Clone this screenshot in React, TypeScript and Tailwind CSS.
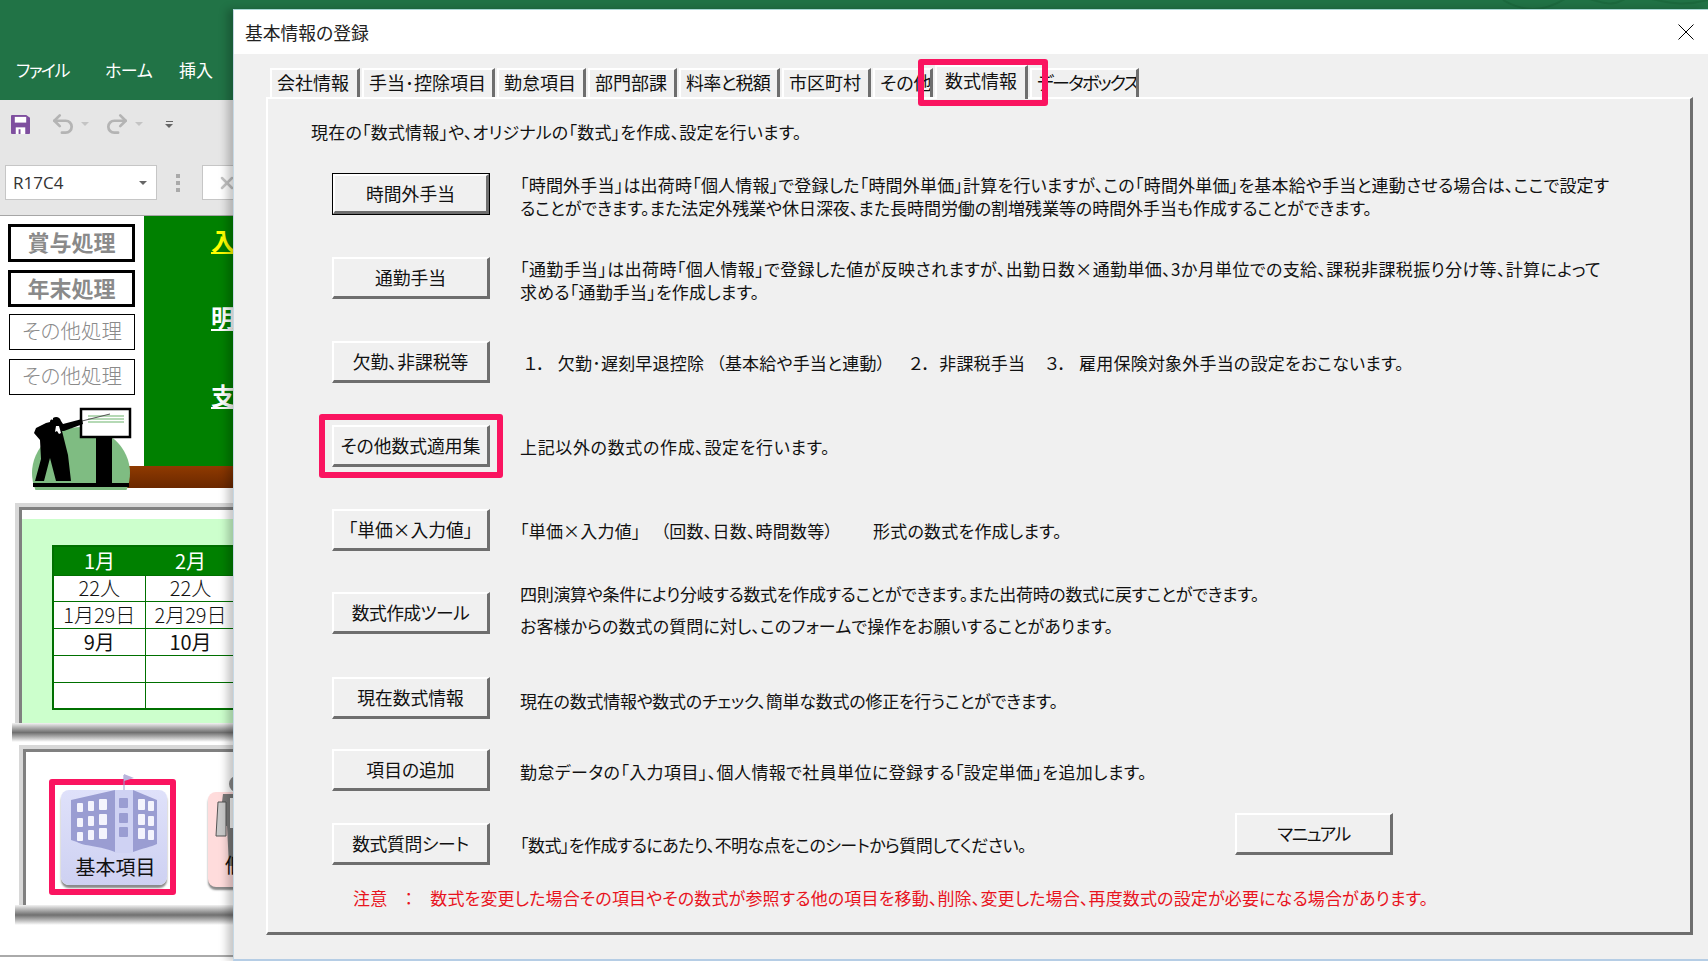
import { Undo2, Redo2, X } from "lucide-react";

const tabs = [
  { label: "会社情報", width: "w-[90px]" },
  { label: "手当･控除項目", width: "w-[133px]" },
  { label: "勤怠項目", width: "w-[89px]" },
  { label: "部門部課", width: "w-[89px]" },
  { label: "料率と税額", width: "w-[101px]", text: "tracking-[-0.8px]" },
  { label: "市区町村", width: "w-[89px]" },
  { label: "その他", width: "w-[60px]" },
  { label: "数式情報", width: "w-[93px]", active: true },
  { label: "データボックス", width: "w-[109px]", text: "tracking-[-1.8px]" },
];

function Bevel({ label, className = "" }: { label: string; className?: string }) {
  return (
    <div
      className={`flex items-center justify-center border-2 border-t-white border-l-white border-r-[3px] border-b-[3px] border-r-[#6e6e6e] border-b-[#6e6e6e] bg-[#f0f0f0] text-[17.8px] text-[#111] whitespace-nowrap ${className}`}
    >
      {label}
    </div>
  );
}

function Row({
  label,
  labelClass = "",
  lines,
  mt,
  variant,
}: {
  label: string;
  labelClass?: string;
  lines: { text: string; className?: string }[];
  mt: string;
  variant?: "primary" | "marked";
}) {
  return (
    <div className={`flex items-center h-[42px] ml-[64px] ${mt}`}>
      <div className="relative w-[158px] h-[42px] shrink-0">
        {variant === "primary" ? (
          <div className="w-full h-full border-[1.5px] border-black">
            <Bevel label={label} className="w-full h-full" />
          </div>
        ) : (
          <Bevel label={label} className={`w-full h-full ${labelClass}`} />
        )}
        {variant === "marked" && (
          <div className="absolute -left-[13px] -top-[11px] w-[184px] h-[64px] border-[6px] border-[#fa1460] rounded-[3px]" />
        )}
      </div>
      <div className="ml-[30px] text-[17px] text-[#111]">
        {lines.map((l) => (
          <div key={l.text} className={`whitespace-pre leading-[23px] ${l.className ?? "tracking-[0.2px]"}`}>
            {l.text}
          </div>
        ))}
      </div>
    </div>
  );
}

function Presenter() {
  return (
    <svg viewBox="0 0 110 85" className="absolute left-[30px] top-[189px] w-[110px] h-[85px] z-10">
      <ellipse cx="51" cy="68" rx="49" ry="46" fill="#7fbc82" />
      <rect x="66" y="28" width="16" height="54" fill="#000" />
      <rect x="51" y="4" width="49" height="28" fill="#fff" stroke="#000" strokeWidth="2.5" />
      <path d="M58 11h36M58 14h36M58 17h36" stroke="#b5d9b5" strokeWidth="2" />
      <path d="M52 16 80 9" stroke="#555" strokeWidth="1" />
      <path
        d="M23 13c3-2 7-1 8 3l2 3 19-5 1 5-19 7-2 0 6 24 3 26H26l-6-23-6 23H5l6-22-1-19-6-7 2-5 10-5 4-1c0-2 1-3 3-2Z"
        fill="#000"
      />
      <path d="m29 21 2 7-2 1-2-3-2 1 1-6Z" fill="#fff" />
      <rect x="3" y="78" width="96" height="4" fill="#000" />
    </svg>
  );
}

function Building() {
  return (
    <svg viewBox="0 0 86 78" className="block w-[86px] h-[78px] overflow-visible">
      <path d="M53 -9v17" stroke="#9a9dd0" strokeWidth="1" />
      <path d="M53 -10 63 -6 53 -3Z" fill="#b9b4dc" />
      <path d="M0 16 44 6v62C30 62 12 62 6 58L0 56Z" fill="#9a9dd2" />
      <path d="M86 16 62 6v62c10-4 18-5 24-8Z" fill="#9a9dd2" />
      <rect x="44" y="6" width="18" height="63" fill="#cfd2f3" />
      {[14, 29, 43].map((y) => (
        <g key={y} fill="#f4f4fd">
          <rect x="6" y={y + 5} width="6" height="9" rx="1" />
          <rect x="17" y={y + 3} width="6" height="10" rx="1" />
          <rect x="28" y={y + 1} width="8" height="11" rx="1" />
          <rect x="67" y={y + 1} width="7" height="11" rx="1" />
          <rect x="77" y={y + 3} width="6" height="10" rx="1" />
          <rect x="48" y={y} width="9" height="10" rx="1" fill="#9a9dd2" />
        </g>
      ))}
    </svg>
  );
}

function Person() {
  return (
    <svg viewBox="0 0 40 90" className="absolute left-[7px] -top-[16px] w-[40px] h-[90px]">
      <circle cx="22" cy="8" r="8" fill="#8b8b8b" />
      <path d="M8 18h30v72H14l-2-40H4Z" fill="#7a7a7a" />
      <path d="M15 22h12v30H15Z" fill="#f7f7f7" />
      <path d="M3 26h8v34H1Z" fill="#c9c9c9" stroke="#555" />
    </svg>
  );
}

function LeftPane() {
  return (
    <div className="w-[233px] shrink-0 bg-white overflow-hidden">
      <div className="h-[100px] bg-[#217346] flex items-start pt-[57px] text-[17px] text-white whitespace-nowrap">
        <span className="ml-[16px] w-[89px] tracking-[-1.5px]">ファイル</span>
        <span className="w-[74px] tracking-[-0.5px]">ホーム</span>
        <span>挿入</span>
      </div>

      <div className="h-[116px] bg-[#e6e6e6] border-b border-[#a6a6a6] pt-[14px]">
        <div className="flex items-center h-[20px] pl-[11px]">
          <svg viewBox="0 0 20 20" className="w-[19px] h-[19px]">
            <path d="M1 0h15l4 3v16a1 1 0 0 1-1 1H1a1 1 0 0 1-1-1V1a1 1 0 0 1 1-1Z" fill="#7f4f9f" />
            <rect x="4" y="2" width="12" height="6" fill="#fff" />
            <rect x="5" y="13" width="10" height="7" fill="#fff" />
            <rect x="8" y="15" width="2" height="5" fill="#7f4f9f" />
          </svg>
          <Undo2 className="ml-[20px] w-[26px] h-[26px] text-[#b4b4b4]" strokeWidth={2.5} />
          <span className="ml-[5px] w-0 h-0 border-x-[4px] border-x-transparent border-t-[4px] border-t-[#c4c4c4]" />
          <Redo2 className="ml-[15px] w-[26px] h-[26px] text-[#b4b4b4]" strokeWidth={2.5} />
          <span className="ml-[5px] w-0 h-0 border-x-[4px] border-x-transparent border-t-[4px] border-t-[#c4c4c4]" />
          <div className="ml-[22px] flex flex-col items-center gap-[2px]">
            <span className="w-[7px] h-px bg-[#666]" />
            <span className="w-0 h-0 border-x-[4px] border-x-transparent border-t-[4px] border-t-[#666]" />
          </div>
        </div>
        <div className="flex items-center mt-[31px]">
          <div className="ml-[5px] w-[152px] h-[35px] shrink-0 bg-white border border-[#c6c6c6] flex items-center justify-between pl-[7px] pr-[9px] text-[17px] text-[#333] font-['Open_Sans',sans-serif]">
            R17C4
            <span className="w-0 h-0 border-x-[4px] border-x-transparent border-t-[4px] border-t-[#666]" />
          </div>
          <div className="ml-[19px] shrink-0 flex flex-col gap-[3px]">
            <span className="w-[4px] h-[4px] bg-[#aaa]" />
            <span className="w-[4px] h-[4px] bg-[#aaa]" />
            <span className="w-[4px] h-[4px] bg-[#aaa]" />
          </div>
          <div className="ml-[22px] w-[40px] h-[35px] shrink-0 bg-white border border-[#c6c6c6] pl-[14px] flex items-center">
            <X className="w-[20px] h-[20px] text-[#c4c4c4] shrink-0" strokeWidth={3} />
          </div>
        </div>
      </div>

      <div className="relative flex h-[272px]">
        <div className="w-[144px] shrink-0 pt-[8px] text-[#8a8a8a]">
          <div className="ml-[8px] w-[127px] h-[38px] border-[3px] border-black flex items-center justify-center pb-[3px] text-[22px] font-bold">賞与処理</div>
          <div className="ml-[8px] mt-[8px] w-[127px] h-[37px] border-[3px] border-black flex items-center justify-center pb-[3px] text-[22px] font-bold">年末処理</div>
          <div className="ml-[9px] mt-[7px] w-[126px] h-[36px] border border-black flex items-center justify-center pb-[3px] text-[20.5px] font-light">その他処理</div>
          <div className="ml-[9px] mt-[9px] w-[126px] h-[36px] border border-black flex items-center justify-center pb-[3px] text-[20.5px] font-light">その他処理</div>
        </div>
        <div className="w-[89px]">
          <div className="h-[250px] bg-[#008000] overflow-hidden pl-[67px] text-[24px] font-bold text-white whitespace-nowrap leading-[30px] pt-[9px]">
            <div className="text-[#ffff00] underline">入力</div>
            <div className="mt-[47px] underline">明細</div>
            <div className="mt-[48px] underline">支給</div>
          </div>
          <div className="h-[22px] -ml-[21px] bg-gradient-to-b from-[#8f3a00] to-[#6b2800]" />
        </div>
        <Presenter />
      </div>

      <div className="ml-[15px] mt-[15px] w-[300px] h-[220px] border-t-[4px] border-l-[4px] border-[#d8d8d8]">
        <div className="h-full border-t-[3px] border-l-[3px] border-[#808080] pt-[9px] bg-white">
          <div className="h-[204px] bg-[#ccffcc] pt-[26px] pl-[30px]">
            <table className="table-fixed w-[300px] border-collapse border-2 border-[#007000] bg-white text-center text-[20px] leading-none text-[#111]">
              <colgroup>
                <col className="w-[92px]" />
                <col className="w-[91px]" />
                <col />
              </colgroup>
              <tbody>
                <tr className="h-[29px] bg-[#008000] text-white">
                  <td>1月</td>
                  <td>2月</td>
                  <td>3月</td>
                </tr>
                <tr className="h-[26px]">
                  <td className="border border-[#007000] font-light">22人</td>
                  <td className="border border-[#007000] font-light">22人</td>
                  <td className="border border-[#007000] font-light">22人</td>
                </tr>
                <tr className="h-[27px]">
                  <td className="border border-[#007000] font-light whitespace-nowrap">1月29日</td>
                  <td className="border border-[#007000] font-light whitespace-nowrap">2月29日</td>
                  <td className="border border-[#007000] font-light whitespace-nowrap">3月29日</td>
                </tr>
                <tr className="h-[27px]">
                  <td className="border border-[#007000]">9月</td>
                  <td className="border border-[#007000]">10月</td>
                  <td className="border border-[#007000]">11月</td>
                </tr>
                <tr className="h-[27px]">
                  <td className="border border-[#007000]" />
                  <td className="border border-[#007000]" />
                  <td className="border border-[#007000]" />
                </tr>
                <tr className="h-[27px]">
                  <td className="border border-[#007000]" />
                  <td className="border border-[#007000]" />
                  <td className="border border-[#007000]" />
                </tr>
              </tbody>
            </table>
          </div>
        </div>
      </div>

      <div className="ml-[12px] h-[19px] bg-gradient-to-b from-[#f2f2f2] via-[#707070] to-white" />

      <div className="ml-[19px] mt-[3px] w-[300px] h-[160px] border-t-[4px] border-l-[4px] border-[#d8d8d8]">
        <div className="h-full border-t-[3px] border-l-[3px] border-[#808080] pt-[27px] pl-[23px] flex items-start">
          <div className="w-[127px] h-[116px] border-[6px] border-[#fa1460] rounded-[3px] shrink-0 pt-[5px]">
            <div className="ml-[6px] w-[106px] h-[95px] rounded-[8px] bg-gradient-to-b from-[#dfe1fa] to-[#ced1f2] shadow-[0_3px_2px_#8a8a8a] flex flex-col items-center">
              <div className="-mt-[6px]">
                <Building />
              </div>
              <span className="-mt-[8px] ml-[3px] text-[20px] leading-[26px] text-[#111] whitespace-nowrap">基本項目</span>
            </div>
          </div>
          <div className="relative ml-[32px] mt-[13px] w-[106px] h-[95px] shrink-0 rounded-[8px] bg-[#ffdcdc] shadow-[0_3px_2px_#8a8a8a]">
            <Person />
            <span className="absolute left-[17px] bottom-[9px] text-[20px] leading-[26px] text-[#111] whitespace-nowrap">個人</span>
          </div>
        </div>
      </div>

      <div className="ml-[15px] h-[20px] bg-gradient-to-b from-[#f2f2f2] via-[#707070] to-white" />
      <div className="mt-[30px] h-[2px] bg-[#aaa]" />
    </div>
  );
}

function Dialog() {
  return (
    <div className="relative z-20 h-[952px] flex flex-col bg-[#f0f0f0] border-t border-t-[#a9d8d4] border-l border-l-[#c5d8e5] border-b-2 border-b-[#b5cde5] shadow-[-6px_0_8px_rgba(0,0,0,0.22)]">
      <div className="h-[44px] shrink-0 bg-white flex items-center justify-between pl-[11px] pr-[14px] text-[17.8px] text-[#222]">
        <span>基本情報の登録</span>
        <svg viewBox="0 0 16 16" className="w-[16px] h-[16px]">
          <path d="M0.5 0.5 15.5 15.5M15.5 0.5 0.5 15.5" stroke="#000" strokeWidth="1" fill="none" />
        </svg>
      </div>

      <div className="relative z-10 flex items-start gap-[2px] ml-[36px] mt-[11px] h-[32px] shrink-0 text-[18px] text-[#111]">
        {tabs.map((t) =>
          t.active ? (
            <div
              key={t.label}
              className={`relative z-10 ${t.width} h-[34px] bg-[#f0f0f0] border-l-2 border-t-2 border-white border-r-[3px] border-r-[#6e6e6e] flex items-start justify-center whitespace-nowrap leading-[26px]`}
            >
              {t.label}
              <div className="absolute -left-[19px] -top-[8px] w-[130px] h-[47px] border-[6px] border-[#fa1460] rounded-[3px]" />
            </div>
          ) : (
            <div
              key={t.label}
              className={`${t.width} ${t.text ?? ""} mt-[3px] h-[29px] bg-[#f0f0f0] border-l-2 border-t-2 border-white border-r-[3px] border-r-[#6e6e6e] pl-[5px] pb-[2px] flex items-center overflow-hidden whitespace-nowrap`}
            >
              {t.label}
            </div>
          ),
        )}
      </div>

      <div className="ml-[32px] w-[1427px] h-[838px] shrink-0 border-t-2 border-l-2 border-white border-r-[3px] border-b-[3px] border-r-[#6e6e6e] border-b-[#6e6e6e]">
        <div className="pl-[43px] pt-[21px] text-[17px] tracking-[0.2px] leading-[24px] text-[#111]">現在の「数式情報」や、オリジナルの「数式」を作成、設定を行います。</div>

        <Row
          label="時間外手当"
          variant="primary"
          mt="mt-[29px]"
          lines={[
            { text: "「時間外手当」は出荷時「個人情報」で登録した「時間外単価」計算を行いますが、この「時間外単価」を基本給や手当と連動させる場合は、ここで設定す" },
            { text: "ることができます。また法定外残業や休日深夜、また長時間労働の割増残業等の時間外手当も作成することができます。", className: "mb-[-3px] tracking-[-0.05px]" },
          ]}
        />
        <Row
          label="通勤手当"
          mt="mt-[42px]"
          lines={[
            { text: "「通勤手当」は出荷時「個人情報」で登録した値が反映されますが、出勤日数×通勤単価、3か月単位での支給、課税非課税振り分け等、計算によって", className: "mt-[4px] tracking-[0.38px]" },
            { text: "求める「通勤手当」を作成します。" },
          ]}
        />
        <Row
          label="欠勤、非課税等"
          mt="mt-[42px]"
          lines={[{ text: " １．   欠勤･遅刻早退控除   （基本給や手当と連動）      ２．  非課税手当     ３．   雇用保険対象外手当の設定をおこないます。" }]}
        />
        <Row label="その他数式適用集" variant="marked" mt="mt-[42px]" lines={[{ text: "上記以外の数式の作成、設定を行います。", className: "tracking-[0.65px]" }]} />
        <Row label="「単価×入力値」" mt="mt-[42px]" lines={[{ text: "「単価×入力値」     （回数、日数、時間数等）          形式の数式を作成します。" }]} />
        <Row
          label="数式作成ツール"
          labelClass="tracking-[-0.6px]"
          mt="mt-[41px]"
          lines={[
            { text: "四則演算や条件により分岐する数式を作成することができます。また出荷時の数式に戻すことができます。", className: "mb-[9px] tracking-[-0.3px]" },
            { text: "お客様からの数式の質問に対し、このフォームで操作をお願いすることがあります。", className: "mb-[8px] tracking-[0.1px]" },
          ]}
        />
        <Row label="現在数式情報" mt="mt-[43px]" lines={[{ text: "現在の数式情報や数式のチェック、簡単な数式の修正を行うことができます。", className: "mt-[4px] tracking-[-0.25px]" }]} />
        <Row label="項目の追加" mt="mt-[30px]" lines={[{ text: "勤怠データの「入力項目」、個人情報で社員単位に登録する「設定単価」を追加します。", className: "mt-[2px] tracking-[0.4px]" }]} />
        <div className="flex items-start h-[42px] ml-[64px] mt-[32px]">
          <Bevel label="数式質問シート" className="w-[158px] h-[42px] shrink-0 tracking-[-0.3px]" />
          <div className="ml-[30px] w-[715px] leading-[44px] text-[17px] tracking-[-0.55px] text-[#111]">「数式」を作成するにあたり、不明な点をこのシートから質問してください。</div>
          <Bevel label="マニュアル" className="w-[158px] h-[42px] shrink-0 -mt-[10px] tracking-[-1.5px]" />
        </div>
        <div className="pl-[85px] mt-[21px] text-[17px] tracking-[0.15px] leading-[24px] text-[#e8141e] whitespace-pre">注意　：　数式を変更した場合その項目やその数式が参照する他の項目を移動、削除、変更した場合、再度数式の設定が必要になる場合があります。</div>
      </div>
    </div>
  );
}

export default function App() {
  return (
    <div className="flex w-[1708px] h-[961px] overflow-hidden font-['Noto_Sans_CJK_JP','Noto_Sans',sans-serif] [font-feature-settings:'palt']">
      <LeftPane />
      <div className="flex-1 min-w-0">
        <div className="h-[9px] bg-[#217346] overflow-hidden">
          <svg viewBox="0 0 1475 9" className="block w-full h-[9px]">
            <path d="M1270 0c20 12 40 12 60 0s40 12 60 0 40 12 85 0" stroke="#1c6a3e" strokeWidth="2" fill="none" />
          </svg>
        </div>
        <Dialog />
      </div>
    </div>
  );
}
